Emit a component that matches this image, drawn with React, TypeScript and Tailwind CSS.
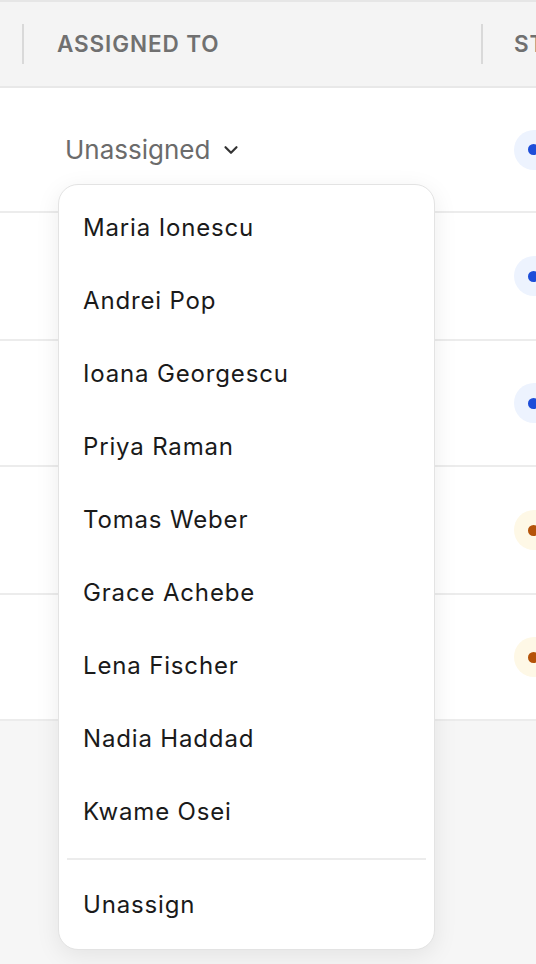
import React from 'react'
import { ChevronDown } from 'lucide-react'

type Row = { status: 'blue' | 'amber'; height: string }

const rows: Row[] = [
    { status: 'blue', height: 'h-[125px]' },
    { status: 'blue', height: 'h-[128px]' },
    { status: 'blue', height: 'h-[126px]' },
    { status: 'amber', height: 'h-[128px]' },
    { status: 'amber', height: 'h-[126px]' },
]

const people = [
    'Maria Ionescu',
    'Andrei Pop',
    'Ioana Georgescu',
    'Priya Raman',
    'Tomas Weber',
    'Grace Achebe',
    'Lena Fischer',
    'Nadia Haddad',
    'Kwame Osei',
]

const StatusPill: React.FC<{ tone: Row['status'] }> = ({ tone }) => (
    <div
        className={`flex items-center h-[40px] w-[120px] rounded-full pl-[14px] ${
            tone === 'blue' ? 'bg-[#edf3fe]' : 'bg-[#fef8e6]'
        }`}
    >
        <span
            className={`block h-[11px] w-[11px] rounded-full ${
                tone === 'blue' ? 'bg-[#1d4ed8]' : 'bg-[#b45309]'
            }`}
        />
    </div>
)

export default function App() {
    return (
        <div
            className="relative h-[964px] w-[536px] overflow-hidden bg-[#f6f6f6]"
            style={{ fontFamily: 'Inter, "Noto Sans", sans-serif' }}
        >
            {/* table */}
            <div className="w-[700px] border-t-2 border-[#e6e6e6]">
                {/* header */}
                <div className="flex h-[86px] items-center border-b-2 border-[#e8e8e8] bg-[#f4f4f4]">
                    <div className="w-[22px]" />
                    <div className="h-[40px] w-[2px] bg-[#d9d9d9]" />
                    <div className="w-[457px] pl-[33px] text-[22.5px] font-semibold uppercase tracking-[0.04em] text-[#707070]">
                        Assigned to
                    </div>
                    <div className="h-[40px] w-[2px] bg-[#d9d9d9]" />
                    <div className="pl-[31px] text-[22.5px] font-semibold uppercase tracking-[0.04em] text-[#707070]">
                        Status
                    </div>
                </div>

                {/* rows */}
                {rows.map((row, i) => (
                    <div
                        key={i}
                        className={`flex items-center border-b-2 border-[#ececec] bg-white ${row.height}`}
                    >
                        <div className="w-[24px]" />
                        <div className="w-[457px] pl-[33px]">
                            {i === 0 && (
                                <button className="flex items-center gap-[10px] px-2 text-[26px] text-[#6b6b6b]">
                                    Unassigned
                                    <ChevronDown className="h-[22px] w-[22px] text-[#333333]" strokeWidth={2.4} />
                                </button>
                            )}
                        </div>
                        <div className="pl-[33px]">
                            <StatusPill tone={row.status} />
                        </div>
                    </div>
                ))}
            </div>

            {/* dropdown menu */}
            <div className="absolute left-[58px] top-[184px] w-[377px] rounded-[20px] border border-[#e3e3e3] bg-white pt-[6px] pb-2 shadow-[0_6px_24px_rgba(0,0,0,0.08)]">
                {people.map((name) => (
                    <div
                        key={name}
                        className="flex h-[73px] items-center px-[24px] text-[24px] tracking-[0.035em] text-[#1a1a1a]"
                    >
                        {name}
                    </div>
                ))}
                <div className="mx-2 mt-[10px] mb-2 h-[2px] bg-[#ececec]" />
                <div className="flex h-[73px] items-center px-[24px] text-[24px] tracking-[0.035em] text-[#1a1a1a]">
                    Unassign
                </div>
            </div>
        </div>
    )
}
